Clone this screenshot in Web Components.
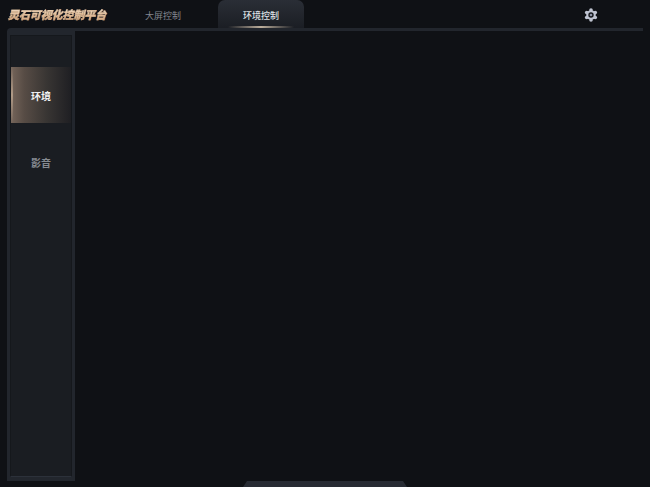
<!DOCTYPE html>
<html lang="zh">
<head>
<meta charset="utf-8">
<title>灵石可视化控制平台</title>
<style>
  html, body { margin: 0; height: 100%; background: #0f1115; overflow: hidden; }
  body { font-family: "Noto Sans CJK SC", "Liberation Sans", sans-serif; }
</style>
</head>
<body>
<app-shell>
  <top-bar slot="top">
    <span slot="brand">灵石可视化控制平台</span>
    <nav-tab>大屏控制</nav-tab>
    <nav-tab active>环境控制</nav-tab>
  </top-bar>
  <side-menu slot="side">
    <side-item active>环境</side-item>
    <side-item>影音</side-item>
  </side-menu>
</app-shell>

<script>
class AppShell extends HTMLElement {
    connectedCallback() {
        this.attachShadow({ mode: 'open' });
        this.shadowRoot.innerHTML = `
            <style>
                :host {
                    display: flex;
                    flex-direction: column;
                    width: 650px;
                    height: 487px;
                    position: relative;
                    overflow: hidden;
                    background: #0f1115;
                }
                .panel {
                    flex: 1;
                    min-height: 0;
                    display: flex;
                    margin: 0 7px 6px 7px;
                    border-top: 3px solid #22262d;
                    border-top-left-radius: 4px;
                }
                .handle {
                    position: absolute;
                    left: 243px;
                    bottom: 0;
                    width: 164px;
                    height: 6px;
                    background: #272b33;
                    clip-path: polygon(0 100%, 4px 0, calc(100% - 4px) 0, 100% 100%);
                }
            </style>
            <slot name="top"></slot>
            <div class="panel"><slot name="side"></slot></div>
            <div class="handle"></div>
        `;
    }
}

class TopBar extends HTMLElement {
    connectedCallback() {
        this.attachShadow({ mode: 'open' });
        this.shadowRoot.innerHTML = `
            <style>
                :host {
                    display: flex;
                    align-items: stretch;
                    height: 28px;
                    flex: none;
                    padding-left: 8px;
                    padding-right: 52px;
                    box-sizing: border-box;
                }
                .brand {
                    width: 112px;
                    flex: none;
                    align-self: center;
                    font-size: 11px;
                    font-weight: 900;
                    font-style: italic;
                    line-height: 14px;
                    letter-spacing: -0.1px;
                    white-space: nowrap;
                    background: linear-gradient(180deg, #f3e2cc, #d2a077);
                    -webkit-background-clip: text;
                    background-clip: text;
                    color: transparent;
                    -webkit-text-stroke: 0.3px #dcb892;
                }
                .tabs { display: flex; gap: 12px; }
                .gear {
                    margin-left: auto;
                    align-self: center;
                    display: block;
                    margin-top: 2px;
                }
            </style>
            <div class="brand"><slot name="brand"></slot></div>
            <div class="tabs"><slot></slot></div>
            <svg class="gear" width="14" height="14" viewBox="0 0 14 14">
                <g fill="#bfc4d1">
                    <circle cx="7" cy="7" r="4.8"/>
                    <circle cx="7" cy="2" r="1.8"/>
                    <circle cx="7" cy="12" r="1.8"/>
                    <circle cx="2.7" cy="4.5" r="1.8"/>
                    <circle cx="11.3" cy="4.5" r="1.8"/>
                    <circle cx="2.7" cy="9.5" r="1.8"/>
                    <circle cx="11.3" cy="9.5" r="1.8"/>
                </g>
                <circle cx="7" cy="7" r="2.7" fill="#14161b"/>
                <circle cx="7" cy="7" r="1.3" fill="#8e95a8"/>
            </svg>
        `;
    }
}

class NavTab extends HTMLElement {
    connectedCallback() {
        this.attachShadow({ mode: 'open' });
        this.shadowRoot.innerHTML = `
            <style>
                :host {
                    display: flex;
                    align-items: center;
                    justify-content: center;
                    position: relative;
                    width: 86px;
                    font-size: 9px;
                    color: #83878f;
                    padding-top: 2px;
                    box-sizing: border-box;
                }
                :host([active]) {
                    color: #dfe1e5;
                    font-weight: 500;
                    background: linear-gradient(180deg, #2a2e36, #1b1e24);
                    border-radius: 7px 7px 0 0;
                }
                :host([active])::after {
                    content: '';
                    position: absolute;
                    left: 10px;
                    right: 10px;
                    bottom: 0;
                    height: 2px;
                    background: linear-gradient(90deg, transparent, #bcae9c, transparent);
                }
            </style>
            <slot></slot>
        `;
    }
}

class SideMenu extends HTMLElement {
    connectedCallback() {
        this.attachShadow({ mode: 'open' });
        this.shadowRoot.innerHTML = `
            <style>
                :host {
                    display: block;
                    width: 68px;
                    box-sizing: border-box;
                    padding: 4px 3px 4px 3px;
                    background: #22262d;
                }
                .inner {
                    height: 100%;
                    box-sizing: border-box;
                    padding-top: 31px;
                    border: 1px solid #15181c;
                    border-bottom-color: #2c313a;
                    background: #1a1d22;
                    display: flex;
                    flex-direction: column;
                }
            </style>
            <div class="inner"><slot></slot></div>
        `;
    }
}

class SideItem extends HTMLElement {
    connectedCallback() {
        this.attachShadow({ mode: 'open' });
        this.shadowRoot.innerHTML = `
            <style>
                :host {
                    display: flex;
                    align-items: center;
                    justify-content: center;
                    position: relative;
                    height: 56px;
                    margin-bottom: 11px;
                    font-size: 10px;
                    color: #868a91;
                    font-weight: 700;
                }
                :host([active]) {
                    color: #f1f2f3;
                    background: linear-gradient(90deg, #75655a, #574c45 22%, #383533 60%, #1f1f23);
                }
                :host([active])::before {
                    content: '';
                    position: absolute;
                    left: 0;
                    top: 0;
                    bottom: 0;
                    width: 2px;
                    background: linear-gradient(180deg, transparent, #b09a86, transparent);
                }
            </style>
            <slot></slot>
        `;
    }
}

customElements.define('app-shell', AppShell);
customElements.define('top-bar', TopBar);
customElements.define('nav-tab', NavTab);
customElements.define('side-menu', SideMenu);
customElements.define('side-item', SideItem);
</script>
</body>
</html>
